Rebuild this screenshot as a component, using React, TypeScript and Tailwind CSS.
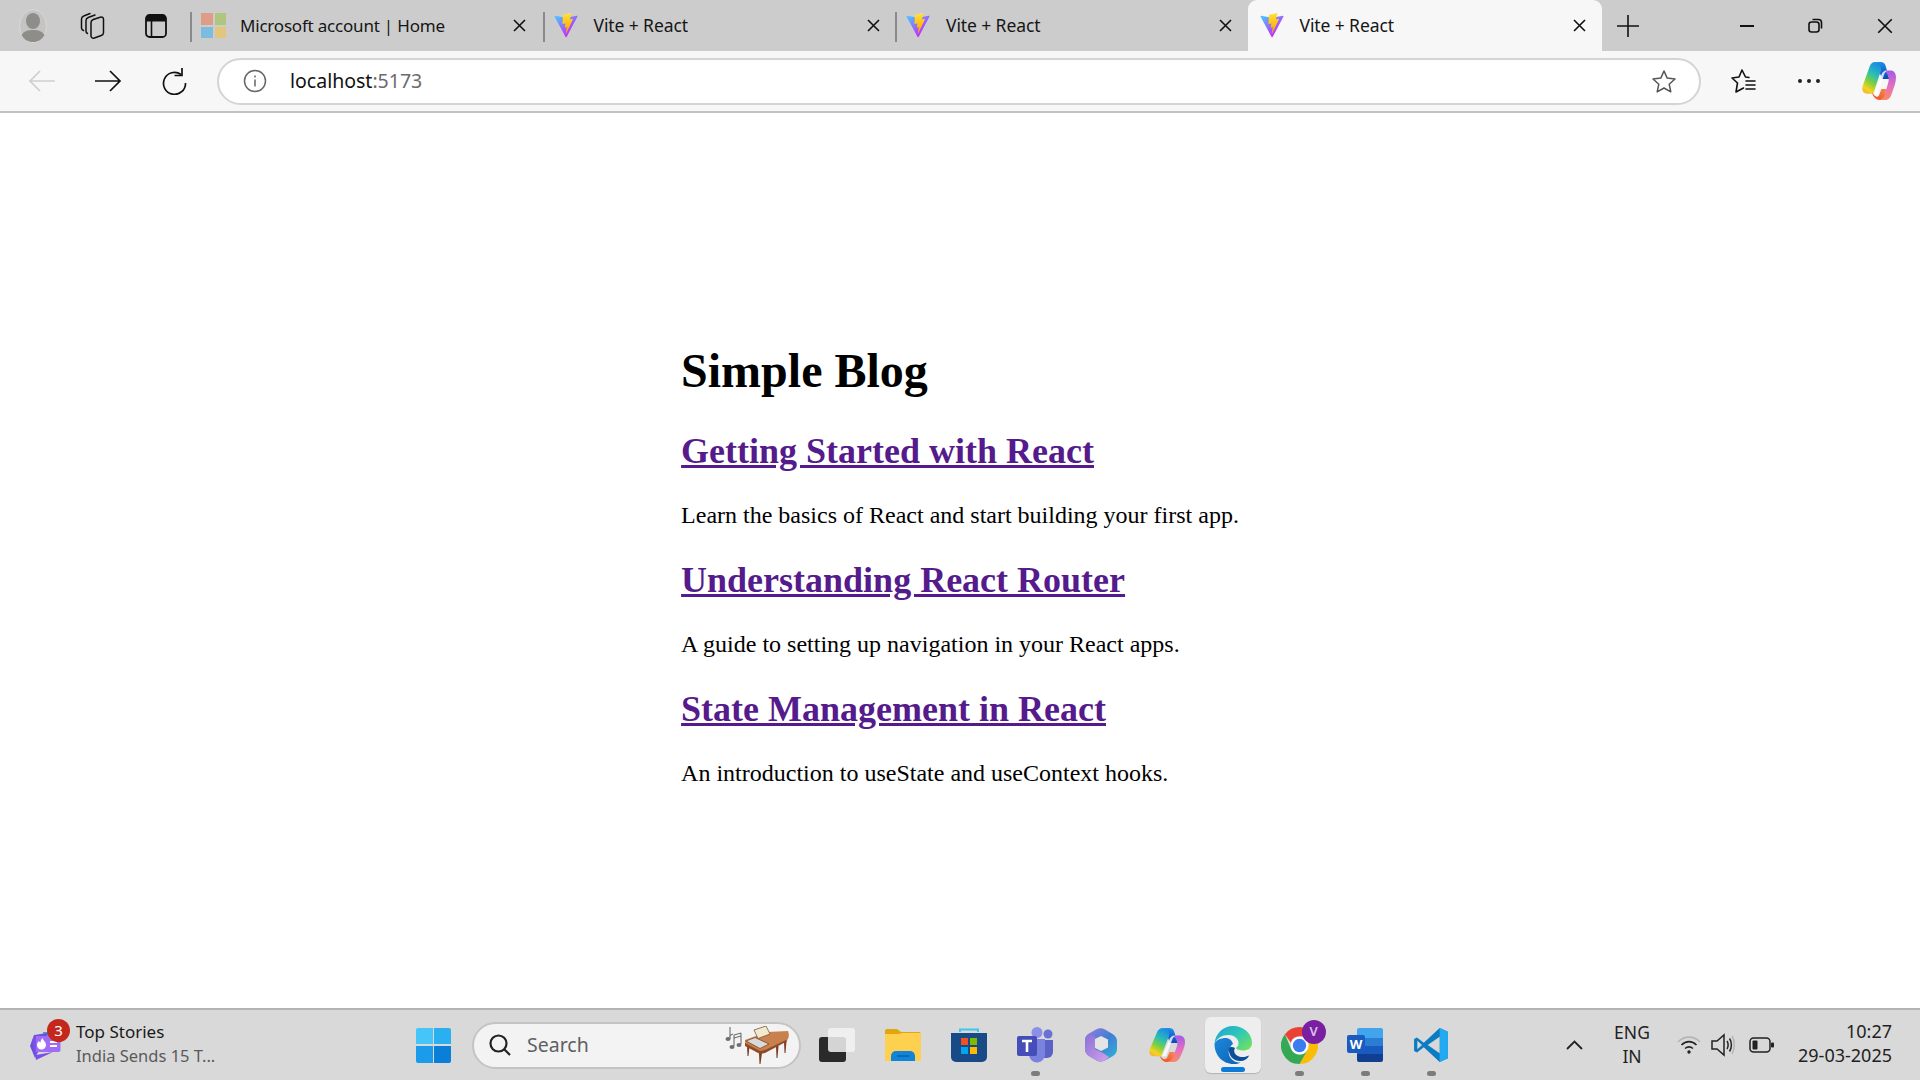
import React from "react";

const ui = "font-['Noto_Sans',sans-serif]";

function Vite({ id }: { id: string }) {
  return (
    <svg width="24" height="25" viewBox="0 0 410 404" preserveAspectRatio="none" className="shrink-0">
      <defs>
        <linearGradient id={id + "a"} x1="6" y1="33" x2="235" y2="344" gradientUnits="userSpaceOnUse">
          <stop stopColor="#41D1FF" />
          <stop offset="1" stopColor="#BD34FE" />
        </linearGradient>
        <linearGradient id={id + "b"} x1="194" y1="8.8" x2="236" y2="293" gradientUnits="userSpaceOnUse">
          <stop stopColor="#FFEA83" />
          <stop offset="0.08" stopColor="#FFDD35" />
          <stop offset="1" stopColor="#FFA800" />
        </linearGradient>
      </defs>
      <path fill={`url(#${id}a)`} d="M399.641 59.5246L215.643 388.545C211.844 395.338 202.084 395.378 198.228 388.618L10.5817 59.5563C6.38087 52.1896 12.6802 43.2665 21.0281 44.7586L205.223 77.6824C206.398 77.8924 207.601 77.8904 208.776 77.6763L389.119 44.8058C397.439 43.2894 403.768 52.1434 399.641 59.5246Z" />
      <path fill={`url(#${id}b)`} d="M292.965 1.5744L156.801 28.2552C154.563 28.6937 152.906 30.5903 152.771 32.8664L144.395 174.33C144.198 177.662 147.258 180.248 150.51 179.498L188.42 170.749C191.967 169.931 195.172 173.055 194.443 176.622L183.18 231.775C182.422 235.487 185.907 238.661 189.532 237.56L212.947 230.446C216.577 229.344 220.065 232.527 219.297 236.242L201.398 322.875C200.278 328.294 207.486 331.249 210.492 326.603L212.5 323.5L323.454 102.072C325.312 98.3645 322.108 94.137 318.036 94.9228L279.014 102.454C275.347 103.161 272.227 99.746 273.262 96.1583L298.731 7.86689C299.767 4.27314 296.636 0.855181 292.965 1.5744Z" />
    </svg>
  );
}

function XIcon({ size = 13, sw = 1.6 }: { size?: number; sw?: number }) {
  return (
    <svg width={size} height={size} viewBox="0 0 13 13" className="shrink-0">
      <path d="M1 1L12 12M12 1L1 12" stroke="#111" strokeWidth={sw * (13 / size)} fill="none" />
    </svg>
  );
}

function MsLogo() {
  return (
    <div className="grid grid-cols-2 gap-[2px] w-[25px] h-[25px] shrink-0">
      <div className="bg-[#e19c88]" />
      <div className="bg-[#afc77d]" />
      <div className="bg-[#7bbcdf]" />
      <div className="bg-[#e3c67c]" />
    </div>
  );
}

function Tab({ title, icon, active, ms }: { title: string; icon: React.ReactNode; active?: boolean; ms?: boolean }) {
  return (
    <div
      className={`h-[51px] flex items-center shrink-0 ${
        active ? "w-[354px] bg-[#f7f7f7] rounded-t-[9px] pl-[12px]" : "w-[352.5px] border-l-2 border-transparent pl-[9px] relative"
      }`}
    >
      {!active && <div className="absolute left-[-2px] top-[12px] w-[2px] h-[30px] bg-[#8a8a8a]" />}
      <div className="w-[26px] flex justify-start shrink-0">{icon}</div>
      <span
        className={`w-[273px] whitespace-nowrap text-[#161616] ${ui} ${
          ms ? "ml-[13px] text-[17px] tracking-[-0.2px]" : "ml-[14px] text-[17.5px] tracking-[-0.1px]"
        }`}
      >
        {title}
      </span>
      <XIcon />
    </div>
  );
}

function Avatar() {
  return (
    <svg width="28" height="34" viewBox="0 0 28 34" className="shrink-0">
      <ellipse cx="14" cy="17" rx="13.5" ry="16.5" fill="#c4c4c2" stroke="#d9d9d6" />
      <ellipse cx="14" cy="12" rx="7" ry="8" fill="#8f8d8a" />
      <path d="M2.5 26C5 22 9 21 14 21s9 1 11.5 5C23 30.5 19 33 14 33S5 30.5 2.5 26Z" fill="#8f8d8a" />
    </svg>
  );
}

function Collections() {
  return (
    <svg width="25" height="27" viewBox="0 0 25 27" fill="none" stroke="#111" strokeWidth="1.5" strokeLinecap="round" className="shrink-0">
      <path d="M11 10.500c0-1.500.8-2.500 2.200-3l7-2.300c2-.6 3.300.5 3.300 2.300v13c0 1.500-.8 2.500-2.200 3l-7 2.500c-2 .6-3.300-.5-3.300-2.300Z" />
      <path d="M7.500 21.500C6.500 21 6 20 6 19V8.500c0-1.500.8-2.500 2.200-3L15 3" />
      <path d="M3.500 18.500C2 18 1.500 17 1.500 16V7c0-1.500.8-2.500 2.200-3L10 1.500" />
    </svg>
  );
}

function VerticalTabs() {
  return (
    <svg width="22" height="24" viewBox="0 0 22 24" className="shrink-0">
      <rect x="1" y="1" width="20" height="22" rx="3.500" fill="none" stroke="#111" strokeWidth="1.800" />
      <path d="M1 4.500A3.500 3.500 0 0 1 4.500 1h13A3.500 3.500 0 0 1 21 4.500V7.500H1Z" fill="#111" />
      <path d="M6.500 7v16" stroke="#111" strokeWidth="1.600" />
    </svg>
  );
}

function Star({ color = "#555" }: { color?: string }) {
  return (
    <svg width="26" height="25" viewBox="0 0 26 25" fill="none" stroke={color} strokeWidth="1.5" strokeLinejoin="round" className="shrink-0">
      <path d="M13 2l3.200 7.100 7.800.9-5.800 5.200 1.600 7.600L13 19l-6.800 3.800 1.600-7.600L2 10l7.800-.9Z" />
    </svg>
  );
}

function Copilot({ id, w, h }: { id: string; w: number; h: number }) {
  return (
    <svg width={w} height={h} viewBox="0 0 36 36" preserveAspectRatio="none" className="shrink-0">
      <defs>
        <linearGradient id={id + "a"} x1="0.6" y1="0" x2="0.2" y2="1">
          <stop offset="0" stopColor="#1b8fe0" />
          <stop offset="0.35" stopColor="#2cc0b0" />
          <stop offset="0.6" stopColor="#7ccf3f" />
          <stop offset="0.85" stopColor="#f5d41c" />
          <stop offset="1" stopColor="#f3b23a" />
        </linearGradient>
        <linearGradient id={id + "b"} x1="0.5" y1="0" x2="0.5" y2="1">
          <stop offset="0" stopColor="#a25ce8" />
          <stop offset="0.55" stopColor="#e56fc0" />
          <stop offset="1" stopColor="#fa8a64" />
        </linearGradient>
        <linearGradient id={id + "c"} x1="0.5" y1="0" x2="0.5" y2="1">
          <stop offset="0" stopColor="#1f8fe8" />
          <stop offset="1" stopColor="#0a48b8" />
        </linearGradient>
        <linearGradient id={id + "d"} x1="0" y1="1" x2="1" y2="0">
          <stop offset="0" stopColor="#f24a1a" />
          <stop offset="1" stopColor="#f78a5a" />
        </linearGradient>
      </defs>
      <path d="M15 0h5c2.500 0 4.200 1.200 5 3.500L29 16h-8L17 4.500C16.400 2.500 16 1 15 0Z" fill={`url(#${id}c)`} />
      <path d="M14 0c-3 0-5 1.800-6 4.500L1 22c-1.800 5 0 8 4.500 8H12l4-11 4-10.500C21 5 19 0 14 0Z" fill={`url(#${id}a)`} />
      <path d="M23 8h7c4 0 6 2.500 6 7 0 4.500-2.500 10-4.500 15-1.200 3.500-3.500 6-6.500 6h-6c2.500 0 4-2 5-5l4-12c1-3.500-.5-9-5-11Z" fill={`url(#${id}b)`} />
      <path d="M13 30h4l6-17c.8-2.500 2-4 4-5-3 0-5.500 1-6.500 4Z" fill="#fff" opacity="0.8" />
      <path d="M10.500 29c1.500 4.500 4.500 7 8 7 3.500 0 5-2.500 6-5.500l1.500-5-5.500 0-2 5c-.6 1.500-1.500 2.500-3 2.500-1.500 0-3-2-5-4Z" fill={`url(#${id}d)`} />
    </svg>
  );
}

function BackArrow({ color }: { color: string }) {
  return (
    <svg width="28" height="24" viewBox="0 0 28 24" fill="none" stroke={color} strokeWidth="1.700" className="shrink-0">
      <path d="M1 12h26M12 2 2 12l10 10" />
    </svg>
  );
}

function ForwardArrow() {
  return (
    <svg width="28" height="24" viewBox="0 0 28 24" fill="none" stroke="#111" strokeWidth="1.700" className="shrink-0">
      <path d="M1 12h25M16 2l10 10-10 10" />
    </svg>
  );
}

function Refresh() {
  return (
    <svg width="26" height="28" viewBox="0 0 26 28" fill="none" stroke="#111" strokeWidth="1.700" className="shrink-0">
      <path d="M20 7.500A11 11 0 1 0 24.500 16" />
      <path d="M21 1v7.500h-7.500" />
    </svg>
  );
}

function Browser() {
  return (
    <div className="shrink-0">
      <div className="h-[51px] bg-[#cccccc] flex items-center">
        <div className="w-[190px] shrink-0 flex items-center pl-[19px]">
          <Avatar />
          <div className="ml-[33px]">
            <Collections />
          </div>
          <div className="ml-[40px]">
            <VerticalTabs />
          </div>
        </div>
        <Tab title="Microsoft account | Home" icon={<MsLogo />} ms />
        <Tab title="Vite + React" icon={<Vite id="v1" />} />
        <Tab title="Vite + React" icon={<Vite id="v2" />} />
        <Tab title="Vite + React" icon={<Vite id="v3" />} active />
        <div className="ml-[15px] shrink-0">
          <svg width="22" height="22" viewBox="0 0 22 22" stroke="#111" strokeWidth="1.600">
            <path d="M11 0v22M0 11h22" />
          </svg>
        </div>
        <div className="ml-[101px] shrink-0 w-[14px] h-[2px] bg-[#111]" />
        <svg width="15" height="15" viewBox="0 0 15 15" fill="none" stroke="#111" strokeWidth="1.600" className="ml-[54px] shrink-0">
          <rect x="1" y="4" width="10" height="10" rx="2.500" />
          <path d="M4.500 1.500h6a3 3 0 0 1 3 3v6" />
        </svg>
        <div className="ml-[54px] shrink-0">
          <XIcon size={16} sw={1.700} />
        </div>
      </div>
      <div className="h-[62px] bg-[#f7f7f7] border-b-2 border-[#c2c2c2] flex items-center">
        <div className="ml-[28px]">
          <BackArrow color="#cfcfcf" />
        </div>
        <div className="ml-[38px]">
          <ForwardArrow />
        </div>
        <div className="ml-[39px]">
          <Refresh />
        </div>
        <div className="ml-[30px] w-[1484px] h-[47px] bg-white border-2 border-[#d4d4d4] rounded-full flex items-center pl-[24px] pr-[22px]">
          <svg width="24" height="24" viewBox="0 0 24 24" fill="none" stroke="#666" strokeWidth="1.500" className="shrink-0">
            <circle cx="12" cy="12" r="10.500" />
            <path d="M12 10.500v7M12 6.500v2" />
          </svg>
          <span className={`ml-[23px] text-[19.5px] text-[#111] ${ui}`}>
            localhost<span className="text-[#6b6b6b]">:5173</span>
          </span>
          <div className="ml-auto">
            <Star />
          </div>
        </div>
        <svg width="26" height="26" viewBox="0 0 26 26" fill="none" stroke="#111" strokeWidth="1.600" strokeLinejoin="round" strokeLinecap="round" className="ml-[30px] shrink-0">
          <path d="M18 9.500L14.500 9 11 2 8 9l-7 1 5.500 5L5 24l7.500-4" />
          <path d="M15 13h9M15 17h9M15 21h9" />
        </svg>
        <div className="ml-[41px] flex gap-[5px] shrink-0">
          <div className="w-[4px] h-[4px] rounded-full bg-[#222]" />
          <div className="w-[4px] h-[4px] rounded-full bg-[#222]" />
          <div className="w-[4px] h-[4px] rounded-full bg-[#222]" />
        </div>
        <div className="ml-[42px]">
          <Copilot id="cp1" w={34} h={38} />
        </div>
      </div>
    </div>
  );
}

function Post({ title, text }: { title: string; text: string }) {
  return (
    <>
      <h2 className="text-[36px] leading-[normal] font-bold my-[30px]">
        <a href="#" className="text-[#551a8b] underline">
          {title}
        </a>
      </h2>
      <p className="text-[24px] leading-[normal] my-[24px]">{text}</p>
    </>
  );
}

function Page() {
  return (
    <main className="flex-1 bg-white flex items-center justify-center font-['Liberation_Serif',serif] text-black">
      <div>
        <h1 className="text-[48px] leading-[normal] font-bold my-[32px]">Simple Blog</h1>
        <Post title="Getting Started with React" text="Learn the basics of React and start building your first app." />
        <Post title="Understanding React Router" text="A guide to setting up navigation in your React apps." />
        <Post title="State Management in React" text="An introduction to useState and useContext hooks." />
      </div>
    </main>
  );
}

function News() {
  return (
    <svg width="36" height="34" viewBox="0 0 36 34" className="shrink-0">
      <path d="M14 4h12v12H14Z" fill="#3aa0d8" />
      <path d="M1 18l4-11 14-2L6 30Z" fill="#6d4fe0" />
      <path d="M6 8h24a1.500 1.500 0 0 1 1.500 1.500V22a2 2 0 0 1-2 2H6Z" fill="#a06cf5" />
      <path d="M3 12l4-5v20l17-3-17 8Z" fill="#7a50e8" />
      <path d="M13.500 10c1 3 3.500 4 3.500 7a4.500 4.500 0 0 1-9 0c0-2 1-3 2-4 .5 1 1 1.500 1.500 1.500 0-1.500.5-3 2-4.500Z" fill="#fff" />
      <path d="M21 14h7M21 18h7" stroke="#fff" strokeWidth="2" />
    </svg>
  );
}

function WinLogo() {
  return (
    <div className="grid grid-cols-2 gap-[1.5px] w-[35px] h-[35px] shrink-0">
      <div className="bg-[#45c5f8] rounded-tl-[2px]" />
      <div className="bg-[#2ab0f0] rounded-tr-[2px]" />
      <div className="bg-[#1a9cea] rounded-bl-[2px]" />
      <div className="bg-[#0a7fd8] rounded-br-[2px]" />
    </div>
  );
}

function Piano() {
  return (
    <svg width="68" height="38" viewBox="0 0 68 38" className="shrink-0">
      <g fill="none" stroke="#6e6e6e" strokeWidth="1.100">
        <path d="M9 1v11c-1-1 0-3 3-4M13 9v11M20 7v11M13 9l7-2M13 12l7-2" />
      </g>
      <g fill="#6e6e6e">
        <ellipse cx="7" cy="13" rx="2.500" ry="2" />
        <ellipse cx="11" cy="21" rx="2.500" ry="2" />
        <ellipse cx="18" cy="19" rx="2.500" ry="2" />
      </g>
      <path d="M38 27h3l-1.500 11h-1ZM26 20h2.500l-1 10h-1ZM55 20h2.500l-1 12h-1ZM63 15h2.500l-1 12h-1Z" fill="#7c3c20" />
      <path d="M24 14L46 6l21-1c1.500 4 1 8-2 10L44 25l-5 1-15-8Z" fill="#c8804e" />
      <path d="M24 17l15 8 5-1 21-10 1.500 1L44 27l-5 1-15-8Z" fill="#8f4a28" />
      <path d="M25 15l14 7.500 9-4.500-14-6.500Z" fill="#d9d9d9" stroke="#7c4a2a" strokeWidth="0.800" />
      <path d="M33 4l12-4 4 8-12 4.500Z" fill="#f3e9cf" stroke="#7a5a3a" strokeWidth="0.800" />
    </svg>
  );
}

function TaskView() {
  return (
    <div className="relative w-[36px] h-[34px] shrink-0">
      <div className="absolute left-0 bottom-0 w-[27px] h-[25px] bg-[#2a2a2a] rounded-[3px]" />
      <div className="absolute right-0 top-0 w-[27px] h-[24px] bg-[#f2f2f2]/85 rounded-[3px]" />
    </div>
  );
}

function Folder() {
  return (
    <svg width="36" height="32" viewBox="0 0 36 32" className="shrink-0">
      <path d="M0 2a2 2 0 0 1 2-2h10l4 3h18a2 2 0 0 1 2 2v5H0Z" fill="#e0a60e" />
      <path d="M0 5h14l3-1h19v28H0Z" fill="#fdd14f" />
      <path d="M6 32v-5a5 5 0 0 1 5-5h14a5 5 0 0 1 5 5v5Z" fill="#0f84d8" />
      <path d="M12 27h12" stroke="#0a5fa8" strokeWidth="1.500" />
    </svg>
  );
}

function Store() {
  return (
    <svg width="36" height="34" viewBox="0 0 36 34" className="shrink-0">
      <path d="M9 4V1.500h18V4" fill="none" stroke="#3fc5ee" strokeWidth="2" />
      <path d="M0 5h36v24a5 5 0 0 1-5 5H5a5 5 0 0 1-5-5Z" fill="#174a86" />
      <rect x="10" y="10" width="7" height="7" fill="#f25022" />
      <rect x="19" y="10" width="7" height="7" fill="#7fba00" />
      <rect x="10" y="19" width="7" height="7" fill="#00a4ef" />
      <rect x="19" y="19" width="7" height="7" fill="#ffb900" />
    </svg>
  );
}

function Teams() {
  return (
    <svg width="38" height="36" viewBox="0 0 38 36" className="shrink-0">
      <circle cx="32" cy="7" r="4.500" fill="#6a71d4" />
      <path d="M26 13h11v12a6 6 0 0 1-6 6h-3Z" fill="#5a62c6" />
      <circle cx="21" cy="5.500" r="5.500" fill="#8a90e6" />
      <path d="M12 12h17v15a8 8 0 0 1-16 1Z" fill="#7a82e0" />
      <rect x="1" y="9" width="20" height="20" rx="2" fill="#444db8" />
      <path d="M6 14h10M11 14v11" stroke="#fff" strokeWidth="2.600" />
    </svg>
  );
}

function M365() {
  return (
    <svg width="32" height="34" viewBox="0 0 32 34" className="shrink-0">
      <defs>
        <linearGradient id="m1" x1="0" y1="0" x2="1" y2="1">
          <stop offset="0" stopColor="#a27be0" />
          <stop offset="0.5" stopColor="#3f7fd4" />
          <stop offset="1" stopColor="#2fb8d8" />
        </linearGradient>
        <linearGradient id="m2" x1="0" y1="0" x2="1" y2="1">
          <stop offset="0" stopColor="#8770d8" />
          <stop offset="1" stopColor="#d8a0e8" />
        </linearGradient>
      </defs>
      <path d="M11 1.500c3-1.800 6-1.800 9 0l7.500 4.500C30 7.500 32 10 32 13v8c0 3-1.500 5.500-4 7l-8 4.500c-3 1.500-6 1.500-8.500 0L4 28c-2.500-1.500-4-4-4-7v-9c0-3 1.500-5 4-6.500Z" fill="url(#m1)" />
      <path d="M0 12c0-3 2-5 4-6l6 3v12l8 4 6 4-4 3.500c-3 1.500-6 1.500-8.500 0L4 28c-2.500-1.500-4-4-4-7Z" fill="url(#m2)" />
      <path d="M10 11l6-3 7 3.500v8L16 23l-6-3Z" fill="#e4e4e4" />
    </svg>
  );
}

function Edge() {
  return (
    <svg width="38" height="38" viewBox="0 0 38 38" className="shrink-0">
      <defs>
        <linearGradient id="e1" x1="0" y1="0" x2="1" y2="0.8">
          <stop offset="0" stopColor="#1aa0d8" />
          <stop offset="0.55" stopColor="#30c8b8" />
          <stop offset="1" stopColor="#70e060" />
        </linearGradient>
        <linearGradient id="e2" x1="0" y1="0" x2="1" y2="1">
          <stop offset="0" stopColor="#1e88d8" />
          <stop offset="1" stopColor="#0a62b8" />
        </linearGradient>
      </defs>
      <path d="M0.500 18C1 8 9 0 19 0c10 0 19 7 19 17 0 5-4 7.500-9 7.500-3 0-6.500-1-7-2.500 2-1.500 2.500-3 2.500-5 0-4.500-5-8-10-8C8 9 3 12 0.500 18Z" fill="url(#e1)" />
      <path d="M0.500 18c0 11 8 20 19 20 3 0 5-.5 7-1.500-4 .5-10-2-11.500-8-1-4 1-8.500 4-10.500-1-4-4.500-6-7-6C6.500 12 2 14 0.500 18Z" fill="url(#e2)" />
      <path d="M15 22c-1 7 4 13 11 13 4 0 8-2 9-5.500-3 1.500-8 2.500-12 0-3-2-3.500-5-2-7.500-2-1.500-5-1.500-6 0Z" fill="#0c4f98" />
    </svg>
  );
}

function Chrome() {
  return (
    <div className="relative w-[37px] h-[37px] shrink-0">
      <svg width="37" height="37" viewBox="0 0 36 36">
        <path d="M18 0a18 18 0 0 1 15.600 9H18a9 9 0 0 0-8.500 6L3.800 7A18 18 0 0 1 18 0Z" fill="#ea4335" />
        <path d="M33.600 9A18 18 0 0 1 18 36l7.800-13.500A9 9 0 0 0 25.800 13Z" fill="#fbbc04" />
        <path d="M3.800 7A18 18 0 0 0 18 36l7.800-13.500A9 9 0 0 1 10 22Z" fill="#34a853" />
        <circle cx="18" cy="18" r="8.500" fill="#fff" />
        <circle cx="18" cy="18" r="6.500" fill="#3b7df0" />
      </svg>
      <div className={`absolute right-[-8px] top-[-7px] w-[24px] h-[24px] rounded-full bg-[#7a1fa2] flex items-center justify-center text-[13px] text-[#d9c3ea] font-semibold ${ui}`}>
        V
      </div>
    </div>
  );
}

function Word() {
  return (
    <svg width="36" height="34" viewBox="0 0 36 34" className="shrink-0">
      <path d="M10 2a2 2 0 0 1 2-2h22a2 2 0 0 1 2 2v8H10Z" fill="#41a5ee" />
      <rect x="10" y="10" width="26" height="8" fill="#2b7cd3" />
      <rect x="10" y="18" width="26" height="8" fill="#185abd" />
      <path d="M10 26h26v6a2 2 0 0 1-2 2H12a2 2 0 0 1-2-2Z" fill="#103f91" />
      <rect x="0" y="7" width="18" height="18" rx="2" fill="#1a5bc0" />
      <text x="9" y="21" textAnchor="middle" fontSize="13" fontWeight="700" fill="#fff" fontFamily="Noto Sans">W</text>
    </svg>
  );
}

function VsCode() {
  return (
    <svg width="36" height="36" viewBox="0 0 100 100" className="shrink-0">
      <path d="M74 3 30 44 11 29 3 33v34l8 4 19-15 44 41 23-10V13Z" fill="#0a7cc4" />
      <path d="M74 3l23 10v74L74 97Z" fill="#23a9f2" />
      <path d="M74 27 41 50l33 23Z" fill="#d8d8d8" />
      <path d="M12 38v24l13-12Z" fill="#d8d8d8" />
    </svg>
  );
}

function Running({ children, dot }: { children: React.ReactNode; dot?: boolean }) {
  return (
    <div className="relative w-[56px] h-[56px] flex items-center justify-center shrink-0">
      {children}
      {dot && <div className="absolute bottom-[-3px] w-[9px] h-[5px] rounded-full bg-[#7c7c7c]" />}
    </div>
  );
}

function Taskbar() {
  return (
    <div className={`h-[72px] shrink-0 bg-[#d9d9d9] border-t-2 border-[#b4b4b4] flex items-center ${ui}`}>
      <div className="w-[416px] shrink-0 flex items-center pl-[29px]">
        <div className="relative">
          <News />
          <div className="absolute right-[-5px] top-[-9px] w-[23px] h-[23px] rounded-full bg-[#c4281c] text-white text-[15px] flex items-center justify-center">
            3
          </div>
        </div>
        <div className="ml-[11px] flex flex-col pb-[3px]">
          <span className="text-[17px] leading-[24px] text-[#1a1a1a]">Top Stories</span>
          <span className="text-[16.500px] leading-[24px] text-[#5a5a5a]">India Sends 15 T...</span>
        </div>
      </div>
      <WinLogo />
      <div className="ml-[21px] w-[329px] h-[47px] shrink-0 rounded-full bg-[#f3f3f3] border-2 border-[#c4c4c4] flex items-center pl-[14px]">
        <svg width="24" height="24" viewBox="0 0 24 24" fill="none" stroke="#222" strokeWidth="2.200" className="shrink-0">
          <circle cx="10.500" cy="10.500" r="8" />
          <path d="M16 16l6 6" />
        </svg>
        <span className="ml-[15px] text-[19.500px] text-[#5f5f5f]">Search</span>
        <div className="ml-auto mr-[10px]">
          <Piano />
        </div>
      </div>
      <div className="ml-[8px] flex items-center gap-[10px]">
        <Running>
          <TaskView />
        </Running>
        <Running>
          <Folder />
        </Running>
        <Running>
          <Store />
        </Running>
        <Running dot>
          <Teams />
        </Running>
        <Running>
          <M365 />
        </Running>
        <Running>
          <Copilot id="cp2" w={36} h={34} />
        </Running>
        <div className="relative w-[56px] h-[56px] rounded-[6px] bg-[#eeeeee] shadow-[0_1px_1px_rgba(0,0,0,0.18)] flex items-center justify-center shrink-0">
          <Edge />
          <div className="absolute bottom-[1px] w-[24px] h-[5px] rounded-full bg-[#0a7bd8]" />
        </div>
        <Running dot>
          <Chrome />
        </Running>
        <Running dot>
          <Word />
        </Running>
        <Running dot>
          <VsCode />
        </Running>
      </div>
      <svg width="17" height="10" viewBox="0 0 17 10" fill="none" stroke="#222" strokeWidth="1.800" className="ml-[107px] shrink-0">
        <path d="M1 9l7.500-7.500L16 9" />
      </svg>
      <div className="ml-[21px] w-[56px] pb-[2px] text-center text-[17.500px] leading-[24px] text-[#222] shrink-0">
        <div>ENG</div>
        <div>IN</div>
      </div>
      <svg width="24" height="20" viewBox="0 0 24 20" fill="none" stroke="#222" strokeWidth="1.600" className="ml-[17px] shrink-0">
        <path d="M1 7c6-6.500 16-6.500 22 0" stroke="#b5b5b5" />
        <path d="M4.500 10c4.500-4.500 10.500-4.500 15 0M8 13.500c2.500-2 5.500-2 8 0" />
        <circle cx="12" cy="17" r="1.700" fill="#222" stroke="none" />
      </svg>
      <svg width="24" height="24" viewBox="0 0 24 24" fill="none" stroke="#222" strokeWidth="1.500" className="ml-[10px] shrink-0">
        <path d="M1 8h5l7-6v20l-7-6H1Z" />
        <path d="M16 8c1.500 2 1.500 6 0 8M18.500 5.500c2.500 3.500 2.500 9.500 0 13" />
        <path d="M21 3c3 4.500 3 13.500 0 18" stroke="#b5b5b5" />
      </svg>
      <svg width="25" height="16" viewBox="0 0 25 16" fill="none" className="ml-[14px] shrink-0">
        <rect x="1" y="1" width="20" height="14" rx="3.500" stroke="#222" strokeWidth="1.500" />
        <rect x="3.500" y="3.500" width="5" height="9" rx="1" fill="#222" />
        <rect x="22" y="5.500" width="3" height="5" rx="1" fill="#222" />
      </svg>
      <div className="ml-[20px] w-[98px] pb-[4px] text-right text-[18px] leading-[24px] text-[#222] shrink-0 whitespace-nowrap">
        <div>10:27</div>
        <div>29-03-2025</div>
      </div>
    </div>
  );
}

export default function App() {
  return (
    <div className="w-[1920px] h-screen flex flex-col overflow-hidden bg-white">
      <Browser />
      <Page />
      <Taskbar />
    </div>
  );
}
